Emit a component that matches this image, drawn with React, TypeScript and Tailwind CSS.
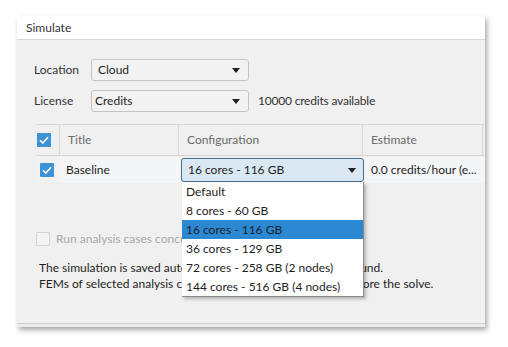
import React from 'react'

const options = [
  'Default',
  '8 cores - 60 GB',
  '16 cores - 116 GB',
  '36 cores - 129 GB',
  '72 cores - 258 GB (2 nodes)',
  '144 cores - 516 GB (4 nodes)',
]

function Arrow() {
  return (
    <svg width="8" height="5" viewBox="0 0 8 5" className="shrink-0">
      <path d="M0 0H8L4 5Z" fill="#1f1f1f" />
    </svg>
  )
}

function Check({ className = '' }: { className?: string }) {
  return (
    <div className={`w-[14px] h-[14px] rounded-[1px] bg-[#3d93d7] flex items-center justify-center ${className}`}>
      <svg width="10" height="8" viewBox="0 0 10 8">
        <path d="M1 4.2L3.8 7L9 1.2" stroke="white" strokeWidth="1.6" fill="none" />
      </svg>
    </div>
  )
}

function Select({ value }: { value: string }) {
  return (
    <div className="w-[158px] h-[22px] rounded-[3px] border border-[#c4c4c4] bg-[#f2f2f2] flex items-center justify-between pl-[6px] pr-[8px]">
      <span>{value}</span>
      <Arrow />
    </div>
  )
}

export default function App() {
  return (
    <div
      className="w-[508px] h-[347px] bg-white pt-[16px] pl-[17px] text-[12px] text-[#1e1e1e]"
      style={{ fontFamily: '"Lato", "Noto Sans", sans-serif' }}
    >
      <div className="w-[468px] h-[311px] bg-[#f0f0f0] flex flex-col shadow-[2px_3px_5px_rgba(0,0,0,0.35)]">
        {/* Title bar */}
        <div className="h-[24px] bg-white border-b border-[#d6d6d6] pl-[9px] flex items-center text-[#333]">
          Simulate
        </div>

        <div className="flex-1 flex flex-col pt-[19px]">
          <div className="flex items-center pl-[17px] gap-[7px]">
            <span className="w-[50px] text-[#333]">Location</span>
            <Select value="Cloud" />
          </div>
          <div className="flex items-center pl-[17px] gap-[7px] mt-[9px]">
            <span className="w-[50px] text-[#333]">License</span>
            <div className="flex items-center gap-[9px]">
              <div className="w-[158px] h-[22px] rounded-[3px] border border-[#c4c4c4] bg-[#f2f2f2] flex items-center justify-between pl-[3px] pr-[8px]">
                <span>Credits</span>
                <Arrow />
              </div>
              <span className="text-[#333] tracking-[-0.2px]">10000 credits available</span>
            </div>
          </div>

          {/* Table */}
          <div className="ml-[19px] mt-[12px] w-[449px]">
            <div className="flex h-[32px] border-y border-[#d6d6d6] text-[#6b6b6b]">
              <div className="w-[24px] border-r border-[#d6d6d6] flex items-center">
                <Check className="ml-[1px]" />
              </div>
              <div className="w-[119px] border-r border-[#d6d6d6] flex items-center pl-[8px]">Title</div>
              <div className="w-[184px] border-r border-[#d6d6d6] flex items-center pl-[8px]">Configuration</div>
              <div className="w-[120px] border-r border-[#d6d6d6] flex items-center pl-[8px]">Estimate</div>
            </div>
            <div className="flex h-[27px] pt-[1px]">
              <div className="w-[24px] bg-[#f2f2f2] flex items-center">
                <Check className="ml-[4px]" />
              </div>
              <div className="w-[121px] bg-[#f4f5f6] flex items-center pl-[6px]">Baseline</div>
              <div className="w-[184px] relative flex items-center">
                <div className="w-[183px] h-[24px] rounded-[3px] border border-[#44708d] bg-[#d9e8f2] flex items-center justify-between pl-[6px] pr-[7px]">
                  <span>16 cores - 116 GB</span>
                  <Arrow />
                </div>
                <div className="absolute top-[25px] left-[1px] w-[182px] bg-white border-r border-b border-[#8a8a8a] shadow-[2px_2px_3px_rgba(0,0,0,0.25)] z-10">
                  {options.map((o, i) => (
                    <div
                      key={o}
                      className={`h-[19px] flex items-center pl-[4px] ${i === 2 ? 'bg-[#2b89d3]' : ''}`}
                    >
                      {o}
                    </div>
                  ))}
                </div>
              </div>
              <div className="flex-1 bg-[#f4f5f6] flex items-center pl-[6px]">0.0 credits/hour (e...</div>
            </div>
          </div>

          <div className="flex items-center gap-[6px] ml-[19px] mt-[47px]">
            <div className="w-[14px] h-[14px] border border-[#d2d2d2] rounded-[1px] bg-[#f3f3f3]" />
            <span className="text-[#a8a8a8]">Run analysis cases concurrently</span>
          </div>

          <div className="ml-[22px] mt-[12px] leading-[16px]">
            <div>The simulation is saved automatically and runs in the background.</div>
            <div>FEMs of selected analysis cases are uploaded to the cloud before the solve.</div>
          </div>

          <div className="mt-auto h-[4px] border-t border-[#d0d0d0] bg-[#ececec]" />
        </div>
      </div>
    </div>
  )
}
